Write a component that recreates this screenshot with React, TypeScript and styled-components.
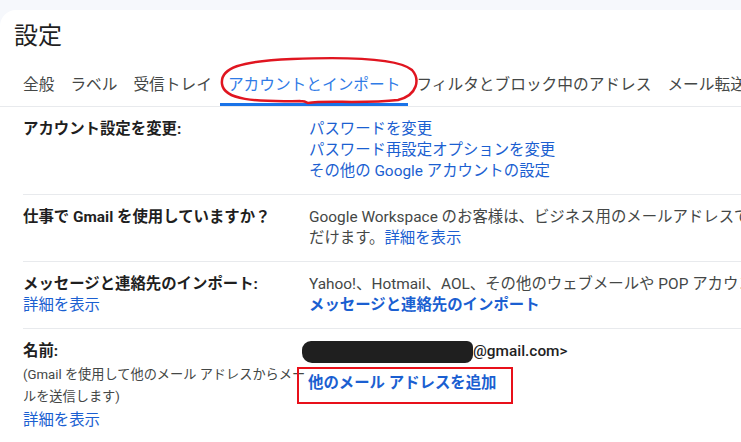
import React from 'react';
import styled, { createGlobalStyle } from 'styled-components';

const GlobalStyle = createGlobalStyle`
  html, body {
    margin: 0;
    padding: 0;
    background: #f6f8fc;
    overflow: hidden;
  }
  body {
    font-family: Roboto, "Noto Sans CJK JP", "Noto Sans", sans-serif;
    color: #1f1f1f;
  }
`;

const Page = styled.div`
  position: relative;
  width: 741px;
  height: 442px;
  padding-top: 10px;
  box-sizing: border-box;
  overflow: hidden;
`;

const Panel = styled.div`
  background: #ffffff;
  border-top-left-radius: 16px;
  height: 100%;
  padding-top: 10px;
  box-sizing: border-box;
`;

const Title = styled.h1`
  margin: 0 0 0 14px;
  font-size: 24px;
  line-height: 32px;
  font-weight: 400;
  color: #1f1f1f;
`;

const TabBar = styled.div`
  display: flex;
  margin-top: 11px;
  padding-left: 15px;
  border-bottom: 1px solid #e8eaed;
  white-space: nowrap;
  overflow: hidden;
`;

const Tab = styled.div<{ active?: boolean }>`
  flex: none;
  padding: 11px 8px 7px;
  font-size: 15.7px;
  line-height: 22px;
  color: ${p => (p.active ? '#2f7be6' : '#444746')};
  border-bottom: 3px solid ${p => (p.active ? '#1a73e8' : 'transparent')};
`;

const Rows = styled.div`
  padding-left: 23px;
`;

const Row = styled.div`
  display: flex;
  padding: 12px 0 12px;
  border-bottom: 1px solid #e8eaed;
  font-size: 15.4px;
  line-height: 21px;
`;

const Label = styled.div`
  flex: none;
  width: 286px;
  white-space: nowrap;
`;

const LabelTitle = styled.div`
  font-weight: 700;
  color: #1f1f1f;
`;

const SubText = styled.div`
  font-size: 13.2px;
  line-height: 22px;
  color: #444746;
  margin: 2px 0 2px;
`;

const Value = styled.div`
  flex: 1;
  min-width: 0;
  white-space: nowrap;
  overflow: hidden;
  color: #444746;
`;

const Line = styled.div``;

const Link = styled.a<{ strong?: boolean }>`
  color: #1b5fd1;
  text-decoration: none;
  font-weight: ${p => (p.strong ? 700 : 400)};
  display: ${p => (p.strong ? 'block' : 'inline')};
`;

const BlockLink = styled(Link)`
  display: block;
`;

const AddressLine = styled.div`
  display: flex;
  align-items: center;
  height: 21px;
  color: #1f1f1f;
  font-weight: 500;
`;

const Redacted = styled.span`
  display: inline-block;
  width: 171px;
  height: 22px;
  margin-left: -7px;
  background: #1f1f1f;
  border-radius: 9px 6px 8px 10px;
`;

const Highlight = styled.div`
  margin: 5px 0 0 -12px;
  width: 216px;
  height: 37px;
  box-sizing: border-box;
  border: 2px solid #e8101a;
  padding: 4px 0 0 9px;
  font-weight: 700;
`;

const OverflowValue = styled(Value)`
  overflow: visible;
`;

const Scribble = styled.svg`
  position: absolute;
  top: 0;
  left: 0;
  pointer-events: none;
`;

const tabs = ['全般', 'ラベル', '受信トレイ', 'アカウントとインポート', 'フィルタとブロック中のアドレス', 'メール転送と POP/IMAP'];

export default function App() {
  return (
    <Page>
      <GlobalStyle />
      <Panel>
        <Title>設定</Title>
        <TabBar>
          {tabs.map(t => (
            <Tab key={t} active={t === 'アカウントとインポート'}>{t}</Tab>
          ))}
        </TabBar>
        <Rows>
          <Row>
            <Label>
              <LabelTitle>アカウント設定を変更:</LabelTitle>
            </Label>
            <Value>
              <BlockLink>パスワードを変更</BlockLink>
              <BlockLink>パスワード再設定オプションを変更</BlockLink>
              <BlockLink>その他の Google アカウントの設定</BlockLink>
            </Value>
          </Row>
          <Row>
            <Label>
              <LabelTitle>仕事で Gmail を使用していますか？</LabelTitle>
            </Label>
            <Value>
              <Line>Google Workspace のお客様は、ビジネス用のメールアドレスで Gmail をご利用いた</Line>
              <Line>だけます。<Link>詳細を表示</Link></Line>
            </Value>
          </Row>
          <Row>
            <Label>
              <LabelTitle>メッセージと連絡先のインポート:</LabelTitle>
              <BlockLink>詳細を表示</BlockLink>
            </Label>
            <Value>
              <Line>Yahoo!、Hotmail、AOL、その他のウェブメールや POP アカウントからインポートします。</Line>
              <Link strong>メッセージと連絡先のインポート</Link>
            </Value>
          </Row>
          <Row>
            <Label>
              <LabelTitle>名前:</LabelTitle>
              <SubText>
                (Gmail を使用して他のメール アドレスからメー<br />ルを送信します)
              </SubText>
              <BlockLink>詳細を表示</BlockLink>
            </Label>
            <OverflowValue>
              <AddressLine>
                <Redacted />
                <span>@gmail.com&gt;</span>
              </AddressLine>
              <Highlight>
                <Link strong>他のメール アドレスを追加</Link>
              </Highlight>
            </OverflowValue>
          </Row>
        </Rows>
      </Panel>
      <Scribble width="741" height="442" viewBox="0 0 741 442">
        <path
          d="M 300 101 C 255 102 224 100 222 84 C 220 68 240 61 292 59 C 342 57 398 58 412 70 C 420 79 418 95 398 100 C 364 104 324 100 308 103 C 305 101 303 101 300 101"
          fill="none"
          stroke="#e01520"
          strokeWidth="2.5"
          strokeLinecap="round"
        />
      </Scribble>
    </Page>
  );
}
